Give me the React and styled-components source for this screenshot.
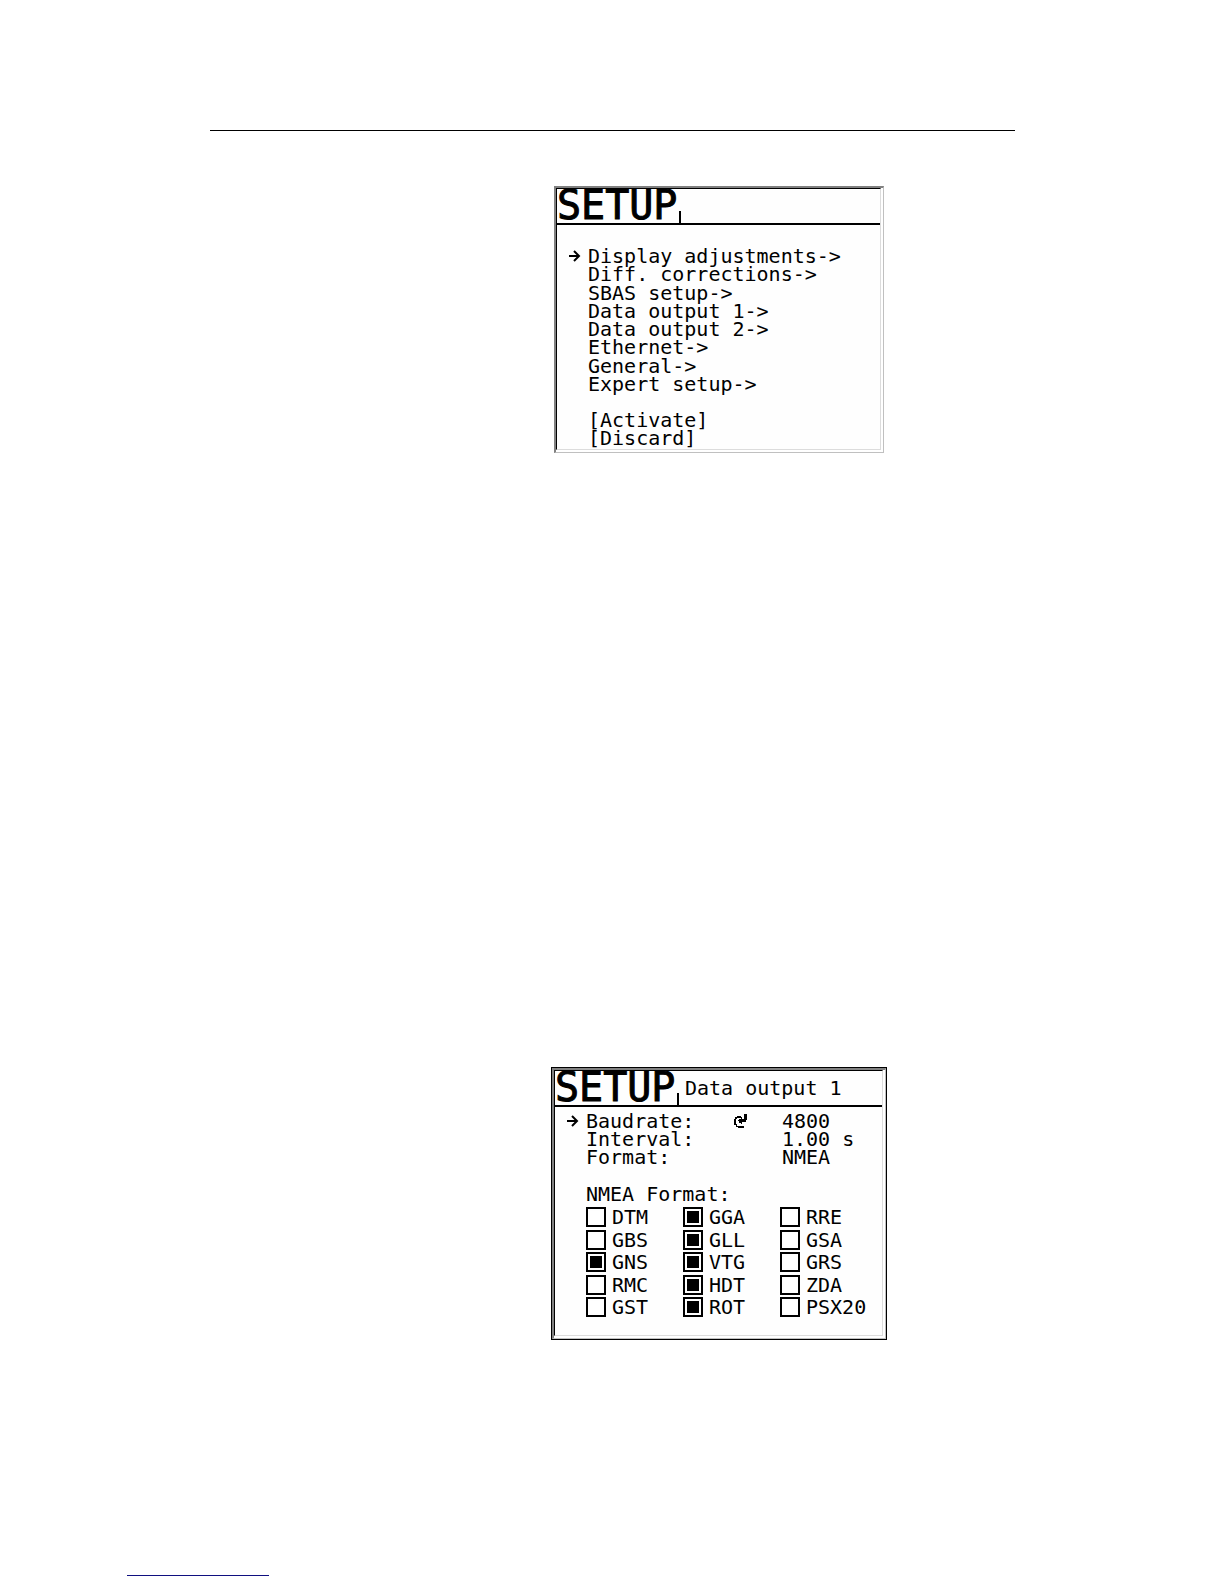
import React, { useState } from "react";
import styled, { createGlobalStyle, css } from "styled-components";

const GlobalStyle = createGlobalStyle`
  *, *::before, *::after { box-sizing: border-box; }
  body {
    margin: 0;
    background: #fff;
    color: #000;
    font-family: "DejaVu Sans Mono", "Liberation Mono", monospace;
    font-size: 20px;
    line-height: 18px;
  }
`;

const Page = styled.div`
  display: flex;
  flex-direction: column;
  min-height: 100vh;
  padding: 130px 0 8px;
`;

const Content = styled.main`
  padding: 0 209px 0 210px;
`;

const Rule = styled.hr`
  margin: 0 0 55px;
  border: 0;
  border-top: 1px solid #000;
`;

const Figures = styled.div`
  display: flex;
  flex-direction: column;
  align-items: center;
  gap: 614px;
  width: 336px;
  margin-left: 341px;
`;

const Frame = styled.section`
  width: ${(p) => (p.$outlined ? "336px" : "330px")};
  ${(p) => p.$outlined && css`border: 1px solid #000;`}
`;

const Bevel = styled.div`
  border: solid #808080;
  border-width: 2px 1px 1px 2px;
  border-right-color: #c0c0c0;
  border-bottom-color: #c0c0c0;
  padding: 0 2px 2px 0;
`;

const Screen = styled.div`
  background: #fefefe;
  border: 1px solid #000;
  border-right-color: #dcdcdc;
  border-bottom-color: #dcdcdc;
`;

const Header = styled.header`
  display: flex;
  align-items: center;
  height: 36px;
  border-bottom: 2px solid #000;
`;

const Title = styled.h2`
  align-self: flex-start;
  width: 122px;
  margin: 0;
  font-size: 40px;
  font-weight: 400;
  line-height: 32px;
  -webkit-text-stroke: 1px #000;
`;

const Tick = styled.span`
  align-self: flex-end;
  width: 2px;
  height: 12px;
  background: #000;
`;

const Subtitle = styled.span`
  padding-left: 6px;
`;

const MenuBody = styled.div`
  padding: 22px 0 2px;
`;

const Menu = styled.nav`
  display: grid;
  align-content: space-between;
  height: 146px;
`;

const Actions = styled.div`
  display: grid;
  margin-top: 18px;
`;

const Row = styled.div`
  display: grid;
  grid-template-columns: 31px 1fr;
  height: 18px;
`;

const Marker = styled.span`
  display: flex;
  align-items: center;
  padding-left: 12px;
`;

const Item = styled.button`
  justify-self: start;
  padding: 0;
  border: 0;
  background: none;
  color: inherit;
  font: inherit;
  white-space: pre;
  cursor: pointer;
`;

const FormBody = styled.form`
  padding: 5px 0 18px;
`;

const Setting = styled.div`
  display: grid;
  grid-template-columns: 148px 48px 1fr;
  align-items: center;
`;

const Value = styled.output`
  grid-column: 3;
`;

const Formats = styled.fieldset`
  margin: 19px 0 0 31px;
  padding: 0;
  border: 0;
  min-width: 0;
`;

const Legend = styled.legend`
  margin-bottom: 4px;
  padding: 0;
`;

const Options = styled.div`
  display: grid;
  grid-template-columns: 97px 97px 1fr;
  align-content: space-between;
  height: 110px;
`;

const Option = styled.label`
  display: flex;
  align-items: center;
  gap: 6px;
  height: 20px;
`;

const Box = styled.input`
  appearance: none;
  flex: none;
  width: 20px;
  height: 20px;
  margin: 0;
  padding: 2px;
  border: 2px solid #000;
  background: #fff content-box;

  &:checked { background-color: #000; }
`;

const Footer = styled.footer`
  display: flex;
  margin-top: auto;
  padding-left: 127px;
`;

const FooterLink = styled.a`
  width: 142px;
  border-bottom: 1px solid #101080;
`;

const Arrow = () => (
  <svg width="12" height="12" viewBox="0 0 12 12" fill="none" stroke="#000" strokeWidth="2" aria-hidden="true">
    <path d="M0 6H9M5 1L10 6L5 11" />
  </svg>
);

const Enter = () => (
  <svg width="14" height="14" viewBox="0 0 14 14" fill="#000" aria-hidden="true">
    <path d="M3 2H7V4H3V5H2V10H3V12H10V14H4V13H2V11H0V5H1V3H3Z" />
    <path d="M10 0H13V6H12V8H8V10H7V9H5V7H4V6H5V5H7V3H8V5H10Z" />
  </svg>
);

const Panel = ({ outlined, subtitle, children }) => (
  <Frame $outlined={outlined}>
    <Bevel>
      <Screen>
        <Header>
          <Title>SETUP</Title>
          <Tick />
          {subtitle && <Subtitle>{subtitle}</Subtitle>}
        </Header>
        {children}
      </Screen>
    </Bevel>
  </Frame>
);

const MenuRow = ({ active, children }) => (
  <Row>
    <Marker>{active && <Arrow />}</Marker>
    <Item type="button">{children}</Item>
  </Row>
);

const menu = [
  "Display adjustments->",
  "Diff. corrections->",
  "SBAS setup->",
  "Data output 1->",
  "Data output 2->",
  "Ethernet->",
  "General->",
  "Expert setup->",
];

const settings = [
  ["Baudrate:", "4800"],
  ["Interval:", "1.00 s"],
  ["Format:", "NMEA"],
];

const sentences = [
  "DTM", "GGA", "RRE",
  "GBS", "GLL", "GSA",
  "GNS", "VTG", "GRS",
  "RMC", "HDT", "ZDA",
  "GST", "ROT", "PSX20",
];

export default function App() {
  const [enabled, setEnabled] = useState(["GNS", "GGA", "GLL", "VTG", "HDT", "ROT"]);
  const toggle = (name) =>
    setEnabled((list) => (list.includes(name) ? list.filter((n) => n !== name) : [...list, name]));

  return (
    <>
      <GlobalStyle />
      <Page>
        <Content>
          <Rule />
          <Figures>
            <Panel>
              <MenuBody>
                <Menu>
                  {menu.map((label, i) => (
                    <MenuRow key={label} active={i === 0}>{label}</MenuRow>
                  ))}
                </Menu>
                <Actions>
                  <MenuRow>[Activate]</MenuRow>
                  <MenuRow>[Discard]</MenuRow>
                </Actions>
              </MenuBody>
            </Panel>
            <Panel outlined subtitle="Data output 1">
              <FormBody>
                {settings.map(([label, value], i) => (
                  <Row key={label}>
                    <Marker>{i === 0 && <Arrow />}</Marker>
                    <Setting>
                      <span>{label}</span>
                      {i === 0 && <Enter />}
                      <Value>{value}</Value>
                    </Setting>
                  </Row>
                ))}
                <Formats>
                  <Legend>NMEA Format:</Legend>
                  <Options>
                    {sentences.map((name) => (
                      <Option key={name}>
                        <Box type="checkbox" checked={enabled.includes(name)} onChange={() => toggle(name)} />
                        {name}
                      </Option>
                    ))}
                  </Options>
                </Formats>
              </FormBody>
            </Panel>
          </Figures>
        </Content>
        <Footer>
          <FooterLink href="#top" />
        </Footer>
      </Page>
    </>
  );
}
